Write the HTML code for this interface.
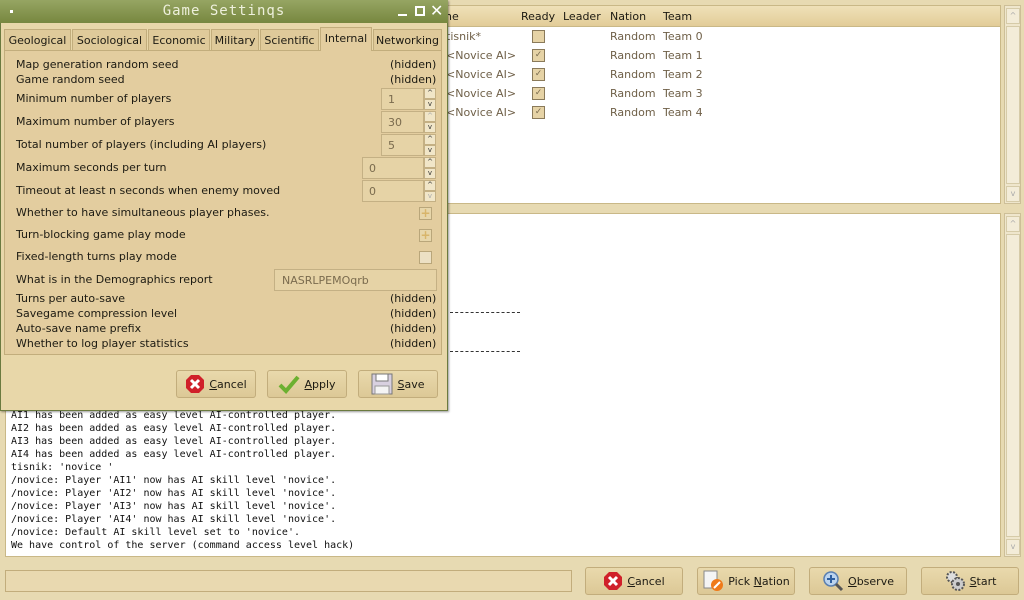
<!DOCTYPE html>
<html><head><meta charset="utf-8"><style>
*{margin:0;padding:0;box-sizing:border-box}
body{width:1024px;height:600px;overflow:hidden;position:relative;background:#e7dab2;font-family:"DejaVu Sans","Liberation Sans",sans-serif;font-size:11px;color:#1c1a12}
.a{position:absolute}
.white{background:#fff;border:1px solid #c9b887}
.sb{background:#efe6cc;border:1px solid #cdbf98}
.sbb{position:absolute;left:1px;width:14px;height:16px;background:#f3ecd8;border:1px solid #d6cba8;color:#aaa;font-size:8px;text-align:center;line-height:14px}
.mono{font-family:"DejaVu Sans Mono","Liberation Mono",monospace;font-size:10px;line-height:13px;color:#111}
.btn{position:absolute;height:28px;border:1px solid #c2ad7c;border-radius:3px;background:linear-gradient(#e9d9ac,#dcc896);font-size:11px;display:flex;align-items:center;justify-content:center;gap:4px}
.row{position:absolute;left:16px;font-size:11px}
.hid{position:absolute;right:10px;font-size:11px}
.spin{position:absolute;height:22px;border:1px solid #c4b084;background:#e6d3a6;color:#7a6b4e;font-size:11px;padding:4px 0 0 6px}
.arr{position:absolute;width:12px;height:11px;border:1px solid #c4b084;background:#f1e6c8;font-size:7px;line-height:9px;text-align:center;color:#333}
.tab{position:absolute;top:29px;height:21px;border:1px solid #c2ad7c;border-bottom:none;background:#dfca9a;font-size:11px;line-height:21px;text-align:center}
.chk{position:absolute;width:13px;height:13px;border:1px solid #8a7a5a;background:#e6d3a6;font-size:9px;line-height:11px;text-align:center;color:#7a6b4e}
.plus{position:absolute;left:419px;width:13px;height:13px;border:1px solid #b9a67a;background:#e7d6aa;color:#d8b56a;font-weight:bold;font-size:12px;line-height:11px;text-align:center}
.pt{position:absolute;color:#6f6048;font-size:11px}
</style></head><body>

<div class="a white" style="left:440px;top:5px;width:561px;height:199px"></div>
<div class="a" style="left:441px;top:6px;width:559px;height:21px;background:linear-gradient(#efe1b8,#e2cc98);border-bottom:1px solid #c9b887"></div>
<div class="a" style="left:445px;top:10px;font-size:11px">ne</div>
<div class="a" style="left:521px;top:10px">Ready</div>
<div class="a" style="left:563px;top:10px">Leader</div>
<div class="a" style="left:610px;top:10px">Nation</div>
<div class="a" style="left:663px;top:10px">Team</div>
<div class="pt" style="left:446px;top:30px">tisnik*</div>
<div class="pt" style="left:446px;top:49px">&lt;Novice AI&gt;</div>
<div class="pt" style="left:446px;top:68px">&lt;Novice AI&gt;</div>
<div class="pt" style="left:446px;top:87px">&lt;Novice AI&gt;</div>
<div class="pt" style="left:446px;top:106px">&lt;Novice AI&gt;</div>
<div class="chk" style="left:532px;top:30px"></div>
<div class="chk" style="left:532px;top:49px">✓</div>
<div class="chk" style="left:532px;top:68px">✓</div>
<div class="chk" style="left:532px;top:87px">✓</div>
<div class="chk" style="left:532px;top:106px">✓</div>
<div class="pt" style="left:610px;top:30px">Random</div><div class="pt" style="left:663px;top:30px">Team 0</div>
<div class="pt" style="left:610px;top:49px">Random</div><div class="pt" style="left:663px;top:49px">Team 1</div>
<div class="pt" style="left:610px;top:68px">Random</div><div class="pt" style="left:663px;top:68px">Team 2</div>
<div class="pt" style="left:610px;top:87px">Random</div><div class="pt" style="left:663px;top:87px">Team 3</div>
<div class="pt" style="left:610px;top:106px">Random</div><div class="pt" style="left:663px;top:106px">Team 4</div>
<div class="a sb" style="left:1004px;top:5px;width:17px;height:199px"><div class="sbb" style="top:2px">^</div><div class="sbb" style="top:180px">v</div><div class="a" style="left:1px;top:20px;width:14px;height:158px;background:#f3ecd8;border:1px solid #d6cba8"></div></div>

<div class="a white" style="left:5px;top:213px;width:996px;height:344px"></div>
<div class="a" style="left:450px;top:312px;width:70px;border-top:1px dashed #333"></div>
<div class="a" style="left:450px;top:351px;width:70px;border-top:1px dashed #333"></div>
<div class="a mono" style="left:11px;top:409px">AI1 has been added as easy level AI-controlled player.<br>AI2 has been added as easy level AI-controlled player.<br>AI3 has been added as easy level AI-controlled player.<br>AI4 has been added as easy level AI-controlled player.<br>tisnik: 'novice '<br>/novice: Player 'AI1' now has AI skill level 'novice'.<br>/novice: Player 'AI2' now has AI skill level 'novice'.<br>/novice: Player 'AI3' now has AI skill level 'novice'.<br>/novice: Player 'AI4' now has AI skill level 'novice'.<br>/novice: Default AI skill level set to 'novice'.<br>We have control of the server (command access level hack)</div>
<div class="a sb" style="left:1004px;top:213px;width:17px;height:344px"><div class="sbb" style="top:2px">^</div><div class="sbb" style="top:325px">v</div><div class="a" style="left:1px;top:20px;width:14px;height:303px;background:#f3ecd8;border:1px solid #d6cba8"></div></div>

<div class="a" style="left:5px;top:570px;width:567px;height:22px;border:1px solid #c2ad7c;background:#e9d9b0"></div>
<div class="btn" style="left:585px;top:567px;width:98px"><svg width="20" height="20"><polygon points="6,1 14,1 19,6 19,14 14,19 6,19 1,14 1,6" fill="#d0202a"/><path d="M6,6L14,14M14,6L6,14" stroke="#fff" stroke-width="3"/></svg><span><u>C</u>ancel</span></div>
<div class="btn" style="left:697px;top:567px;width:98px"><svg width="22" height="22"><rect x="2" y="1" width="13" height="17" fill="#f4f4f4" stroke="#888"/><circle cx="15" cy="15" r="6" fill="#ef7a1a"/><path d="M12,18L18,12" stroke="#fff" stroke-width="2"/></svg><span>Pick <u>N</u>ation</span></div>
<div class="btn" style="left:809px;top:567px;width:98px"><svg width="22" height="22"><circle cx="9" cy="9" r="7" fill="#bcd4ee" stroke="#5a7fb0" stroke-width="1.5"/><path d="M9,5V13M5,9H13" stroke="#2e5fa0" stroke-width="2"/><path d="M14,14L20,20" stroke="#555" stroke-width="3"/></svg><span><u>O</u>bserve</span></div>
<div class="btn" style="left:921px;top:567px;width:98px"><svg width="22" height="22"><circle cx="8" cy="7" r="5" fill="#ddd" stroke="#555" stroke-width="2" stroke-dasharray="2 1.5"/><circle cx="14" cy="14" r="6" fill="#ccc" stroke="#555" stroke-width="2" stroke-dasharray="2 1.5"/><circle cx="14" cy="14" r="2" fill="#555"/></svg><span><u>S</u>tart</span></div>

<div class="a" style="left:0;top:0;width:448px;height:411px;background:#e8d7a9;border:1px solid #6b7a3f;box-shadow:1px 1px 2px rgba(0,0,0,.4)"></div>
<div class="a" style="left:0;top:0;width:448px;height:23px;background:linear-gradient(#96a563,#77873f);color:#eef0dc;font-family:'DejaVu Sans Mono',monospace;font-size:14px;text-align:center;line-height:23px;letter-spacing:1px">Game Settinqs</div>
<div class="a" style="left:10px;top:10px;width:3px;height:3px;background:#fff"></div>
<div class="a" style="left:398px;top:14px;width:9px;height:2px;background:#fff"></div>
<div class="a" style="left:415px;top:6px;width:10px;height:10px;border:2px solid #fff"></div>
<div class="a" style="left:430px;top:1px;color:#fff;font-size:16px">✕</div>

<div class="tab" style="left:4px;width:67px">Geological</div>
<div class="tab" style="left:72px;width:75px">Sociological</div>
<div class="tab" style="left:148px;width:62px">Economic</div>
<div class="tab" style="left:211px;width:48px">Military</div>
<div class="tab" style="left:260px;width:59px">Scientific</div>
<div class="tab" style="left:320px;top:27px;height:24px;width:52px;background:#e3cd9f;z-index:2">Internal</div>
<div class="tab" style="left:373px;width:69px">Networking</div>
<div class="a" style="left:4px;top:50px;width:438px;height:305px;background:#e3cd9f;border:1px solid #c2ad7c"></div>

<div class="row" style="top:58px">Map generation random seed</div><div class="hid" style="left:390px;top:58px">(hidden)</div>
<div class="row" style="top:73px">Game random seed</div><div class="hid" style="left:390px;top:73px">(hidden)</div>
<div class="row" style="top:92px">Minimum number of players</div>
<div class="row" style="top:115px">Maximum number of players</div>
<div class="row" style="top:138px">Total number of players (including AI players)</div>
<div class="row" style="top:161px">Maximum seconds per turn</div>
<div class="row" style="top:184px">Timeout at least n seconds when enemy moved</div>
<div class="row" style="top:206px">Whether to have simultaneous player phases.</div>
<div class="row" style="top:228px">Turn-blocking game play mode</div>
<div class="row" style="top:250px">Fixed-length turns play mode</div>
<div class="row" style="top:273px">What is in the Demographics report</div>
<div class="row" style="top:292px">Turns per auto-save</div><div class="hid" style="left:390px;top:292px">(hidden)</div>
<div class="row" style="top:307px">Savegame compression level</div><div class="hid" style="left:390px;top:307px">(hidden)</div>
<div class="row" style="top:322px">Auto-save name prefix</div><div class="hid" style="left:390px;top:322px">(hidden)</div>
<div class="row" style="top:337px">Whether to log player statistics</div><div class="hid" style="left:390px;top:337px">(hidden)</div>

<div class="spin" style="left:381px;top:88px;width:43px">1</div><div class="arr" style="left:424px;top:88px">^</div><div class="arr" style="left:424px;top:99px">v</div>
<div class="spin" style="left:381px;top:111px;width:43px">30</div><div class="arr" style="left:424px;top:111px;color:#aaa">^</div><div class="arr" style="left:424px;top:122px">v</div>
<div class="spin" style="left:381px;top:134px;width:43px">5</div><div class="arr" style="left:424px;top:134px">^</div><div class="arr" style="left:424px;top:145px">v</div>
<div class="spin" style="left:362px;top:157px;width:62px">0</div><div class="arr" style="left:424px;top:157px">^</div><div class="arr" style="left:424px;top:168px">v</div>
<div class="spin" style="left:362px;top:180px;width:62px">0</div><div class="arr" style="left:424px;top:180px">^</div><div class="arr" style="left:424px;top:191px;color:#aaa">v</div>
<div class="plus" style="top:207px">+</div>
<div class="plus" style="top:229px">+</div>
<div class="plus" style="top:251px;color:transparent;background:#ece0c4"></div>
<div class="spin" style="left:274px;top:269px;width:163px;padding-left:7px">NASRLPEMOqrb</div>

<div class="btn" style="left:176px;top:370px;width:80px"><svg width="20" height="20"><polygon points="6,1 14,1 19,6 19,14 14,19 6,19 1,14 1,6" fill="#d0202a"/><path d="M6,6L14,14M14,6L6,14" stroke="#fff" stroke-width="3"/></svg><span><u>C</u>ancel</span></div>
<div class="btn" style="left:267px;top:370px;width:80px"><svg width="22" height="20"><path d="M2,11L8,17L20,3" stroke="#6cb030" stroke-width="4" fill="none"/></svg><span><u>A</u>pply</span></div>
<div class="btn" style="left:358px;top:370px;width:80px"><svg width="22" height="22"><rect x="1" y="1" width="20" height="20" fill="#d8d0e0" stroke="#777"/><rect x="5" y="1" width="12" height="7" fill="#fff" stroke="#777"/><rect x="4" y="13" width="14" height="8" fill="#f4f4f4" stroke="#999"/></svg><span><u>S</u>ave</span></div>
</body></html>
